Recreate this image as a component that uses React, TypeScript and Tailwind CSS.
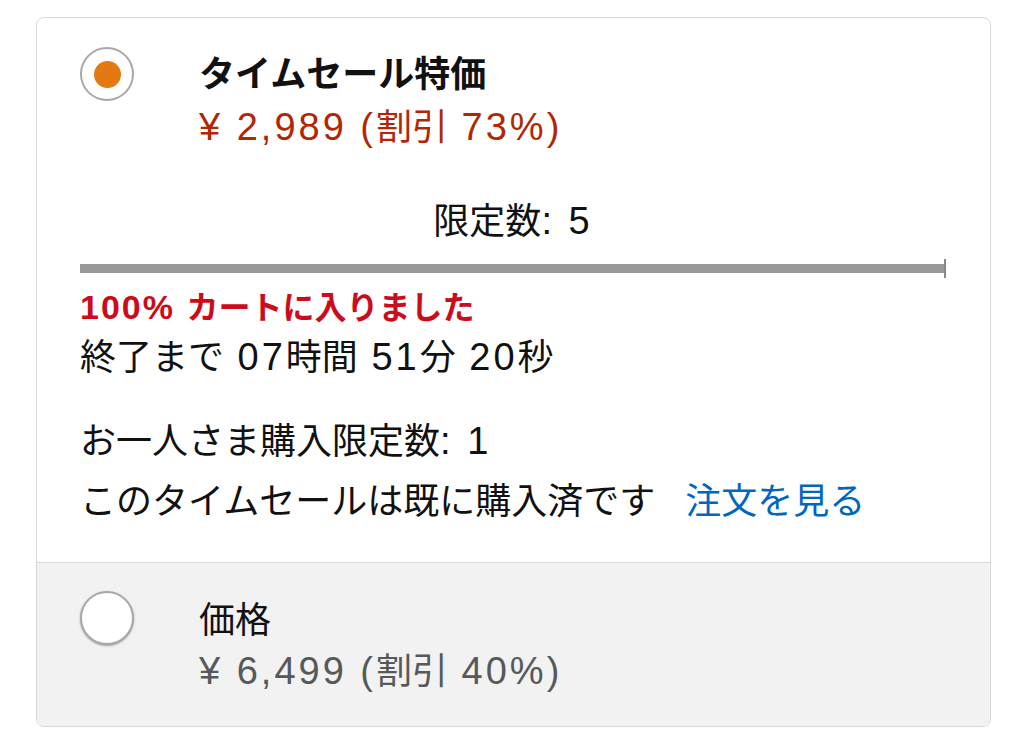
import React from 'react';

const font = {
  fontFamily: '"Liberation Sans", "Noto Sans CJK JP", sans-serif',
};

// Latin runs are set a touch wider to match the reference's Hiragino digits
const L = ({ children, bold }: { children: React.ReactNode; bold?: boolean }) => (
  <span className={bold ? 'text-[34px] tracking-[2px]' : 'text-[38px] tracking-[3px]'}>{children}</span>
);

const Radio = ({ checked }: { checked: boolean }) => (
  <div
    className={`w-[54px] h-[54px] shrink-0 rounded-full border-2 flex items-center justify-center bg-white ${
      checked ? 'border-[#a8a8a8]' : 'border-[#a8a8a8] shadow-[0_1px_2px_rgba(0,0,0,0.35)]'
    }`}
  >
    {checked && <div className="w-[27px] h-[27px] rounded-full bg-[#e47911]" />}
  </div>
);

export default function App() {
  return (
    <div className="bg-white min-h-[736px] pt-[17px] pl-[36px]" style={font}>
      <div className="w-[955px] h-[710px] border border-[#d5d9d9] rounded-[8px] overflow-hidden flex flex-col">
        {/* Time sale option */}
        <div className="pt-[29px] pl-[43px] pr-[44px] pb-[30px] text-[#111]">
          <div className="flex items-start">
            <Radio checked />
            <div className="ml-[65px] mt-[2px]">
              <div className="text-[36px] leading-[52px] font-bold">タイムセール特価</div>
              <div className="text-[36px] leading-[52px] text-[#b12704]">
                <L>¥ 2,989 (</L>割引<L> 73%)</L>
              </div>
            </div>
          </div>

          <div className="mt-[41px] text-center text-[36px] leading-[52px]">
            限定数<L>: 5</L>
          </div>

          <div className="mt-[11px] flex items-center">
            <div className="flex-1 h-[9px] bg-[#999999]" />
            <div className="w-[2px] h-[19px] bg-[#888888]" />
          </div>

          <div className="mt-[7px] text-[32px] leading-[44px] font-bold text-[#cc0c1a]">
            <L bold>100% </L>カートに入りました
          </div>
          <div className="mt-[3px] text-[36px] leading-[48px]">
            終了まで<L> 07</L>時間<L> 51</L>分<L> 20</L>秒
          </div>

          <div className="mt-[29px] text-[36px] leading-[60px]">
            お一人さま購入限定数<L>: 1</L>
          </div>
          <div className="text-[36px] leading-[60px]">
            このタイムセールは既に購入済です
            <span className="ml-[30px] text-[#0066c0]">注文を見る</span>
          </div>
        </div>

        {/* Regular price option */}
        <div className="flex-1 border-t border-[#d5d9d9] bg-[#f2f2f2] pt-[28px] pl-[43px]">
          <div className="flex items-start">
            <Radio checked={false} />
            <div className="ml-[65px] mt-[4px]">
              <div className="text-[36px] leading-[52px] text-[#111]">価格</div>
              <div className="text-[36px] leading-[48px] text-[#565959]">
                <L>¥ 6,499 (</L>割引<L> 40%)</L>
              </div>
            </div>
          </div>
        </div>
      </div>
    </div>
  );
}
